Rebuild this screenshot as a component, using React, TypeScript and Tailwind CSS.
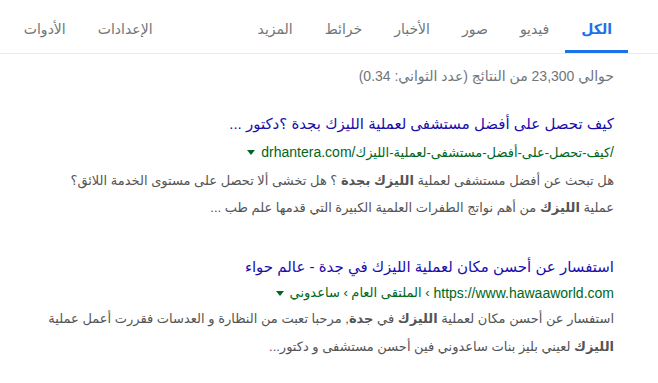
import React from 'react';

const tabs = ['الكل', 'فيديو', 'صور', 'الأخبار', 'خرائط', 'المزيد'];

function Caret() {
  return <span className="mx-[6px] inline-block h-0 w-0 border-x-[4px] border-t-[5px] border-x-transparent border-t-[#006621] align-middle" />;
}

export default function App(): React.JSX.Element {
  return (
    <div dir="rtl" className="h-[383px] w-[658px] overflow-hidden bg-white font-['Liberation_Sans','DejaVu_Sans',sans-serif]">
      <nav className="flex h-[54px] items-stretch border-b border-[#ebebeb] pr-[30px] text-[14px] text-[#70757a]">
        {tabs.map((t, i) => (
          <a
            key={t}
            className={`flex items-center px-4 pt-[9px] ${i === 0 ? 'border-b-[3px] border-[#1a73e8] font-bold text-[#1a73e8]' : 'border-b-[3px] border-transparent'}`}
          >
            {t}
          </a>
        ))}
        <a className="mr-[73px] flex items-center border-b-[3px] border-transparent px-4 pt-[9px]">الإعدادات</a>
        <a className="flex items-center border-b-[3px] border-transparent px-4 pt-[9px]">الأدوات</a>
      </nav>

      <main className="pr-[44px] pl-4">
        <p className="mt-[12px] text-[14px] text-[#70757a]">حوالي 23,300 من النتائج (عدد الثواني: 0.34)</p>

        <section className="mt-[23px]">
          <h3 className="text-[15px] leading-[28px] text-[#1a0dab]">كيف تحصل على أفضل مستشفى لعملية الليزك بجدة ؟دكتور ...</h3>
          <div className="flex items-center text-[14px] leading-[28px] text-[#006621]">
            <span dir="ltr">drhantera.com/<span className="text-[13px]">كيف-تحصل-على-أفضل-مستشفى-لعملية-الليزك</span>/</span>
            <Caret />
          </div>
          <p className="text-[13px] leading-[27px] text-[#545454]">
            هل تبحث عن أفضل مستشفى لعملية <b>الليزك بجدة</b> ؟ هل تخشى ألا تحصل على مستوى الخدمة اللائق؟
            <br />
            عملية <b>الليزك</b> من أهم نواتج الطفرات العلمية الكبيرة التي قدمها علم طب ...
          </p>
        </section>

        <section className="mt-[32px]">
          <h3 className="text-[15px] leading-[28px] text-[#1a0dab]">استفسار عن أحسن مكان لعملية الليزك في جدة - عالم حواء</h3>
          <div className="flex items-center text-[14px] leading-[24px] text-[#006621]">
            <span dir="ltr">https://www.hawaaworld.com</span>
            <span className="mr-[4px] text-[13px]">› الملتقى العام › ساعدوني</span>
            <Caret />
          </div>
          <p className="text-[13px] leading-[28px] text-[#545454]">
            استفسار عن أحسن مكان لعملية <b>الليزك</b> في <b>جدة</b>, مرحبا تعبت من النظارة و العدسات فقررت أعمل عملية
            <br />
            <b>الليزك</b> لعيني بليز بنات ساعدوني فين أحسن مستشفى و دكتور...
          </p>
        </section>
      </main>
    </div>
  );
}
